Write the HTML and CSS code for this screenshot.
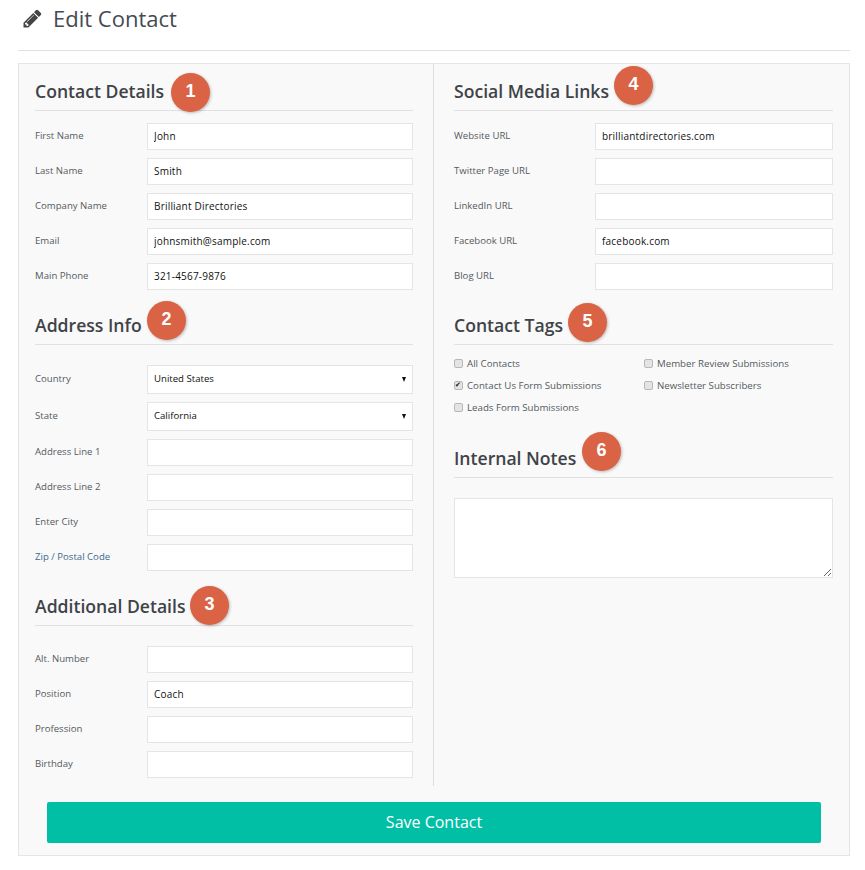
FILE: index.html
```html
<!DOCTYPE html>
<html lang="en">
<head>
<meta charset="utf-8">
<title>Edit Contact</title>
<link rel="stylesheet" href="styles.css">
</head>
<body>
<header class="page-head">
  <svg class="pencil" viewBox="0 0 1792 1792" aria-hidden="true"><path d="M491 1536l91-91-235-235-91 91v107h128v128h107zm523-928q0-22-22-22-10 0-17 7l-542 542q-7 7-7 17 0 22 22 22 10 0 17-7l542-542q7-7 7-17zm-54-192l416 416-832 832h-416v-416zm683 96q0 53-37 90l-166 166-416-416 166-165q36-38 90-38 53 0 91 38l235 234q37 39 37 91z"/></svg>
  <h1>Edit Contact</h1>
</header>
<form class="panel">
  <div class="cols">
    <div class="col col-left">
      <section>
        <h2 class="sec-title">Contact Details<span class="badge b1">1</span></h2>
        <div class="rows">
          <label class="row"><span>First Name</span><input type="text" value="John"></label>
          <label class="row"><span>Last Name</span><input type="text" value="Smith"></label>
          <label class="row"><span>Company Name</span><input type="text" value="Brilliant Directories"></label>
          <label class="row"><span>Email</span><input type="text" value="johnsmith@sample.com"></label>
          <label class="row"><span>Main Phone</span><input type="text" value="321-4567-9876"></label>
        </div>
      </section>
      <section class="next">
        <h2 class="sec-title">Address Info<span class="badge b2">2</span></h2>
        <div class="rows rows-wide">
          <label class="row"><span>Country</span><span class="sel"><select><option>United States</option></select></span></label>
          <label class="row"><span>State</span><span class="sel"><select><option>California</option></select></span></label>
          <label class="row"><span>Address Line 1</span><input type="text"></label>
          <label class="row"><span>Address Line 2</span><input type="text"></label>
          <label class="row"><span>Enter City</span><input type="text"></label>
          <label class="row"><span class="blue">Zip / Postal Code</span><input type="text"></label>
        </div>
      </section>
      <section class="next">
        <h2 class="sec-title">Additional Details<span class="badge b3">3</span></h2>
        <div class="rows rows-wide">
          <label class="row"><span>Alt. Number</span><input type="text"></label>
          <label class="row"><span>Position</span><input type="text" value="Coach"></label>
          <label class="row"><span>Profession</span><input type="text"></label>
          <label class="row"><span>Birthday</span><input type="text"></label>
        </div>
      </section>
    </div>
    <div class="col col-right">
      <section>
        <h2 class="sec-title">Social Media Links<span class="badge b4">4</span></h2>
        <div class="rows">
          <label class="row"><span>Website URL</span><input type="text" value="brilliantdirectories.com"></label>
          <label class="row"><span>Twitter Page URL</span><input type="text"></label>
          <label class="row"><span>LinkedIn URL</span><input type="text"></label>
          <label class="row"><span>Facebook URL</span><input type="text" value="facebook.com"></label>
          <label class="row"><span>Blog URL</span><input type="text"></label>
        </div>
      </section>
      <section class="next">
        <h2 class="sec-title">Contact Tags<span class="badge b5">5</span></h2>
        <div class="tags">
          <label class="tag"><input type="checkbox">All Contacts</label>
          <label class="tag"><input type="checkbox">Member Review Submissions</label>
          <label class="tag"><input type="checkbox" checked>Contact Us Form Submissions</label>
          <label class="tag"><input type="checkbox">Newsletter Subscribers</label>
          <label class="tag"><input type="checkbox">Leads Form Submissions</label>
        </div>
      </section>
      <section class="notes">
        <h2 class="sec-title">Internal Notes<span class="badge b6">6</span></h2>
        <textarea></textarea>
      </section>
    </div>
  </div>
  <button class="save" type="button">Save Contact</button>
</form>
</body>
</html>
```
FILE: styles.css
```css
* { box-sizing: border-box; }
body {
  margin: 0;
  padding: 0 15px 14px 18px;
  background: #fff;
  font-family: "Open Sans", sans-serif;
  color: #4a4f55;
}
.page-head {
  display: flex;
  align-items: center;
  gap: 10px;
  height: 51px;
  padding: 0 0 14px 4px;
  border-bottom: 1px solid #e0e0e0;
  margin-bottom: 12px;
}
.pencil { width: 21px; height: 21px; fill: #444; flex: none; }
h1 { margin: 0; font-size: 22px; font-weight: 400; line-height: 30px; color: #444b52; }
.panel {
  border: 1px solid #e5e5e5;
  background: #f9f9f9;
  height: 793px;
}
.cols { display: grid; grid-template-columns: 415px 1fr; height: 722px; }
.col-left { padding: 0 20px 0 16px; border-right: 1px solid #dedede; }
.col-right { padding: 0 16px 0 20px; }
.sec-title {
  position: relative;
  margin: 0;
  height: 47px;
  padding-top: 15px;
  border-bottom: 1px solid #e0e0e0;
  font-size: 17.6px;
  line-height: 24px;
  font-weight: 600;
  color: #3f4347;
}
.next { margin-top: 8px; }
.rows { display: grid; row-gap: 8px; margin-top: 12px; }
.rows-wide { margin-top: 20px; }
.row {
  display: grid;
  grid-template-columns: 112px 1fr;
  align-items: center;
  font-size: 9.6px;
  line-height: 14px;
  color: #555a60;
}
.row > span:first-child { padding-bottom: 2px; }
.col-right .row { grid-template-columns: 141px 1fr; }
.row > .blue { color: #3a6a8c; }
input[type="text"], select, textarea {
  display: block;
  width: 100%;
  border: 1px solid #e5e5e5;
  background: #fff;
  font-family: "Open Sans", sans-serif;
  font-size: 10px;
  letter-spacing: 0.2px;
  color: #111;
  border-radius: 0;
  outline: 0;
}
input[type="text"] { height: 27px; padding: 0 6px 1px; }
.sel { display: block; position: relative; }
select {
  height: 29px;
  padding: 0 6px 2px;
  appearance: none;
  font-size: 9.6px;
  letter-spacing: 0;
}
.sel::after {
  content: "";
  position: absolute;
  right: 7px;
  top: 12px;
  border-left: 2.5px solid transparent;
  border-right: 2.5px solid transparent;
  border-top: 5px solid #111;
}
.tags {
  display: grid;
  grid-template-columns: 190px 1fr;
  row-gap: 6px;
  margin-top: 10px;
}
.tag {
  display: flex;
  align-items: center;
  height: 16px;
  font-size: 9.7px;
  color: #555a60;
}
.tag input {
  appearance: none;
  width: 9px;
  height: 9px;
  margin: 0 4px 0 0;
  border: 1px solid #b8b8b8;
  border-radius: 2px;
  background: #e4e4e4;
  position: relative;
}
.tag input:checked::after {
  content: "✔";
  position: absolute;
  left: 0;
  top: -3px;
  font-size: 7px;
  line-height: 12px;
  color: #111;
}
.notes { margin-top: 16px; }
textarea { height: 80px; margin-top: 20px; resize: vertical; }
.save {
  display: block;
  width: 774px;
  height: 41px;
  margin: 16px 0 0 28px;
  padding: 0 0 2px;
  border: 0;
  border-radius: 2px;
  background: #00bfa5;
  color: #fff;
  font-family: "Open Sans", sans-serif;
  font-size: 16px;
}
.badge {
  position: absolute;
  width: 39px;
  height: 39px;
  border-radius: 50%;
  background: #d96344;
  box-shadow: 1px 1px 3px rgba(0,0,0,.25);
  color: #fff;
  font-family: "Liberation Sans", sans-serif;
  font-weight: 700;
  font-size: 18px;
  line-height: 36px;
  text-align: center;
}
.b1 { left: 136px; top: 9px; }
.b2 { left: 112px; top: 3px; }
.b3 { left: 155px; top: 7px; }
.b4 { left: 160px; top: 2px; }
.b5 { left: 114px; top: 5px; }
.b6 { left: 128px; top: 1px; }
```
